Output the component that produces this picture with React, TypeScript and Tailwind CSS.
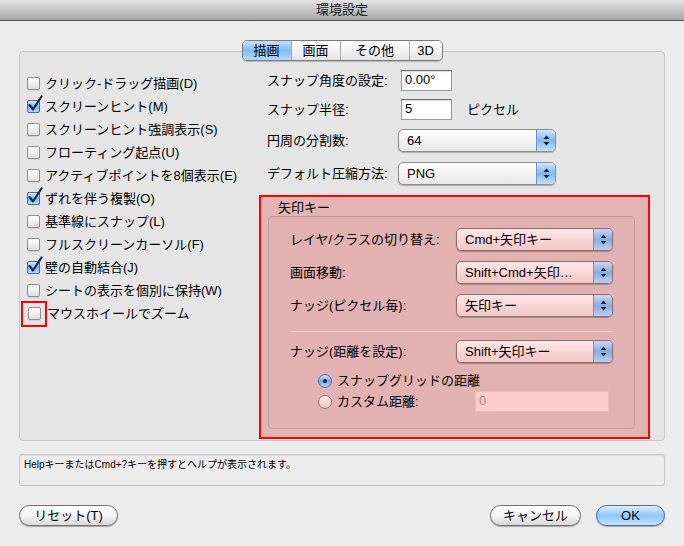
import React from "react";

const FONT = { fontFamily: '"Liberation Sans", "Noto Sans CJK JP", sans-serif' };

const leftItems = [
  { label: "クリック-ドラッグ描画(D)", checked: false },
  { label: "スクリーンヒント(M)", checked: true },
  { label: "スクリーンヒント強調表示(S)", checked: false },
  { label: "フローティング起点(U)", checked: false },
  { label: "アクティブポイントを8個表示(E)", checked: false },
  { label: "ずれを伴う複製(O)", checked: true },
  { label: "基準線にスナップ(L)", checked: false },
  { label: "フルスクリーンカーソル(F)", checked: false },
  { label: "壁の自動結合(J)", checked: true },
  { label: "シートの表示を個別に保持(W)", checked: false },
];

const Checkbox = ({ checked }: { checked: boolean }) => (
  <div className="relative w-[13px] h-[13px] shrink-0">
    {checked ? (
      <div className="w-[13px] h-[13px] rounded-[2px] border border-[#4c6d9c] bg-gradient-to-b from-[#d6eafc] via-[#7fb6ee] to-[#b4d9fb]" />
    ) : (
      <div className="w-[13px] h-[13px] rounded-[2px] border border-[#8e8e8e] bg-gradient-to-b from-white to-[#dedede] shadow-[0_1px_0_rgba(0,0,0,0.08)]" />
    )}
    {checked && (
      <svg className="absolute left-[1px] -top-[5px]" width="15" height="17" viewBox="0 0 15 17">
        <path d="M1.5 10 L5 14.5 L13.5 1.5" fill="none" stroke="#1a2740" strokeWidth="2.2" strokeLinecap="round" strokeLinejoin="round" />
      </svg>
    )}
  </div>
);

const Arrows = () => (
  <svg width="7" height="11" viewBox="0 0 7 11">
    <path d="M3.5 0.5 L6.5 4 L0.5 4 Z" fill="#1c1c1c" />
    <path d="M3.5 10.5 L6.5 7 L0.5 7 Z" fill="#1c1c1c" />
  </svg>
);

const Popup = ({ value, pink = false }: { value: string; pink?: boolean }) => (
  <div
    className={`h-[23px] rounded-[5px] border flex overflow-hidden shadow-[0_1px_1px_rgba(0,0,0,0.25)] ${
      pink ? "border-[#8a6e6e] bg-gradient-to-b from-[#ffe6e6] to-[#f2c6c6]" : "border-[#8d8d8d] bg-gradient-to-b from-white to-[#e6e6e6]"
    }`}
  >
    <div className="flex-1 pl-[8px] flex items-center text-[13px] leading-[16px] text-black whitespace-nowrap overflow-hidden">{value}</div>
    <div
      className={`w-[19px] border-l flex items-center justify-center ${
        pink ? "border-[#7b8fb5] bg-gradient-to-b from-[#c9d8f2] via-[#86ace0] to-[#b8d0f0]" : "border-[#6f92c2] bg-gradient-to-b from-[#cfe6fc] via-[#7cb8f3] to-[#bfe0fd]"
      }`}
    >
      <Arrows />
    </div>
  </div>
);

const TextField = ({ value, w = "w-[51px]" }: { value: string; w?: string }) => (
  <div className={`${w} h-[21px] border border-[#9a9a9a] border-t-[#6e6e6e] bg-white shadow-[inset_0_1px_1px_rgba(0,0,0,0.15)] pl-[3px] text-[13px] leading-[18px] text-black`}>
    {value}
  </div>
);

const Radio = ({ on }: { on: boolean }) =>
  on ? (
    <div className="w-[14px] h-[14px] rounded-full border border-[#4c6d9c] bg-gradient-to-b from-[#d3e8fc] via-[#6fa9e6] to-[#aed3f8] flex items-center justify-center">
      <div className="w-[4px] h-[4px] rounded-full bg-[#1b2436]" />
    </div>
  ) : (
    <div className="w-[14px] h-[14px] rounded-full border border-[#8a7373] bg-gradient-to-b from-[#fff0f0] to-[#eac3c3]" />
  );

const tabs = [
  { label: "描画", w: "w-[48px]", on: true },
  { label: "画面", w: "w-[49px]", on: false },
  { label: "その他", w: "w-[69px]", on: false },
  { label: "3D", w: "w-[33px]", on: false },
];

const Button = ({ label, w, primary = false }: { label: string; w: string; primary?: boolean }) => (
  <div
    className={`${w} h-[21px] rounded-full border flex items-center justify-center text-[13px] leading-[16px] text-black shadow-[0_1px_1px_rgba(0,0,0,0.3)] ${
      primary ? "border-[#4a6c9e] bg-gradient-to-b from-[#dcefff] via-[#8ec6f5] to-[#c2e3fc]" : "border-[#707070] bg-gradient-to-b from-white via-[#f3f3f3] to-[#d9d9d9]"
    }`}
  >
    {label}
  </div>
);

export default function App() {
  return (
    <div className="w-[684px] h-[546px] bg-[#ececec] flex flex-col overflow-hidden" style={FONT}>
      <div className="h-[21px] border-b border-[#4f4f4f] bg-gradient-to-b from-[#e2e2e2] to-[#a7a7a7] flex items-center justify-center text-[13px] leading-[16px] text-[#1a1a1a]">
        環境設定
      </div>

      <div className="px-[19px] flex flex-col">
        <div className="flex justify-center pt-[19px] -mb-[10px] relative z-10">
          <div className="flex h-[21px] rounded-[5px] border border-[#7a7a7a] overflow-hidden shadow-[0_1px_1px_rgba(0,0,0,0.2)]">
            {tabs.map((t, i) => (
              <div
                key={t.label}
                className={`${t.w} flex items-center justify-center text-[13px] leading-[16px] text-black ${i > 0 ? "border-l border-[#a8a8a8]" : ""} ${
                  t.on ? "bg-gradient-to-b from-[#c4e0fb] via-[#80baf1] to-[#b3d9fb]" : "bg-gradient-to-b from-white to-[#e4e4e4]"
                }`}
              >
                {t.label}
              </div>
            ))}
          </div>
        </div>

        <div className="h-[390px] rounded-[4px] border border-[#c6c6c6] bg-[#e5e5e5] flex">
          <div className="w-[239px] pl-[7px] pt-[20px] flex flex-col">
            {leftItems.map((it) => (
              <div key={it.label} className="h-[23px] flex items-center gap-[5px] text-[13px] leading-[16px] text-black whitespace-nowrap">
                <Checkbox checked={it.checked} />
                {it.label}
              </div>
            ))}
            <div className="h-[23px] flex items-center gap-[5px] text-[13px] leading-[16px] text-black whitespace-nowrap -ml-[6px]">
              <div className="w-[26px] h-[26px] border-2 border-[#ff0000] flex items-center justify-center">
                <Checkbox checked={false} />
              </div>
              <span className="-ml-[5px]">マウスホイールでズーム</span>
            </div>
          </div>

          <div className="w-[391px] pt-[18px] flex flex-col">
            <div className="flex items-center h-[21px] pl-[8px]">
              <div className="w-[134px] text-[13px] leading-[16px]">スナップ角度の設定:</div>
              <TextField value="0.00°" />
            </div>
            <div className="flex items-center h-[21px] pl-[8px] mt-[8px]">
              <div className="w-[134px] text-[13px] leading-[16px]">スナップ半径:</div>
              <TextField value="5" />
              <div className="ml-[15px] text-[13px] leading-[16px]">ピクセル</div>
            </div>
            <div className="flex items-center pl-[8px] mt-[9px]">
              <div className="w-[131px] text-[13px] leading-[16px]">円周の分割数:</div>
              <div className="w-[158px]">
                <Popup value="64" />
              </div>
            </div>
            <div className="flex items-center pl-[8px] mt-[10px]">
              <div className="w-[131px] text-[13px] leading-[16px]">デフォルト圧縮方法:</div>
              <div className="w-[158px]">
                <Popup value="PNG" />
              </div>
            </div>

            <div className="mt-[10px] h-[244px] border-2 border-[#ff0000] bg-[#e3b4b4] pl-[7px] pt-[3px] flex flex-col">
              <div className="pl-[10px] h-[16px] text-[13px] leading-[16px] text-black">矢印キー</div>
              <div className="w-[367px] h-[213px] rounded-[4px] border border-[#c39a9a] bg-[#e2b2b2] pt-[11px] pl-[21px] flex flex-col">
                {[
                  ["レイヤ/クラスの切り替え:", "Cmd+矢印キー"],
                  ["画面移動:", "Shift+Cmd+矢印…"],
                  ["ナッジ(ピクセル毎):", "矢印キー"],
                ].map(([l, v], i) => (
                  <div key={l} className={`flex items-center ${i > 0 ? "mt-[10px]" : ""}`}>
                    <div className="w-[166px] text-[13px] leading-[16px] text-black whitespace-nowrap">{l}</div>
                    <div className="w-[157px]">
                      <Popup value={v} pink />
                    </div>
                  </div>
                ))}
                <div className="mt-[14px] w-[322px] h-px bg-[#c49a9a] border-b border-[#efcaca]" />
                <div className="flex items-center mt-[8px]">
                  <div className="w-[166px] text-[13px] leading-[16px] text-black whitespace-nowrap">ナッジ(距離を設定):</div>
                  <div className="w-[157px]">
                    <Popup value="Shift+矢印キー" pink />
                  </div>
                </div>
                <div className="pl-[28px] mt-[8px] flex flex-col">
                  <div className="h-[20px] flex items-center gap-[5px] text-[13px] leading-[16px] text-black">
                    <Radio on />
                    スナップグリッドの距離
                  </div>
                  <div className="h-[21px] flex items-center gap-[5px] text-[13px] leading-[16px] text-black">
                    <Radio on={false} />
                    <span className="w-[133px]">カスタム距離:</span>
                    <div className="w-[134px] h-[21px] border border-[#e8bcbc] bg-[#ffcccc] pl-[3px] text-[13px] leading-[18px] text-[#9a8a8a]">0</div>
                  </div>
                </div>
              </div>
            </div>
          </div>
        </div>

        <div className="mt-[13px] h-[32px] rounded-[3px] border border-[#c4c4c4] bg-[#ececec] shadow-[inset_0_1px_1px_rgba(0,0,0,0.06)] pl-[4px] pt-[3px] text-[10px] leading-[14px] text-black">
          Helpキーまたは<span>Cmd+?</span>キーを押すとヘルプが表示されます。
        </div>

        <div className="mt-[19px] flex items-center">
          <Button label="リセット(T)" w="w-[99px]" />
          <div className="flex-1" />
          <Button label="キャンセル" w="w-[91px]" />
          <div className="w-[15px]" />
          <Button label="OK" w="w-[69px]" primary />
        </div>
      </div>
    </div>
  );
}
